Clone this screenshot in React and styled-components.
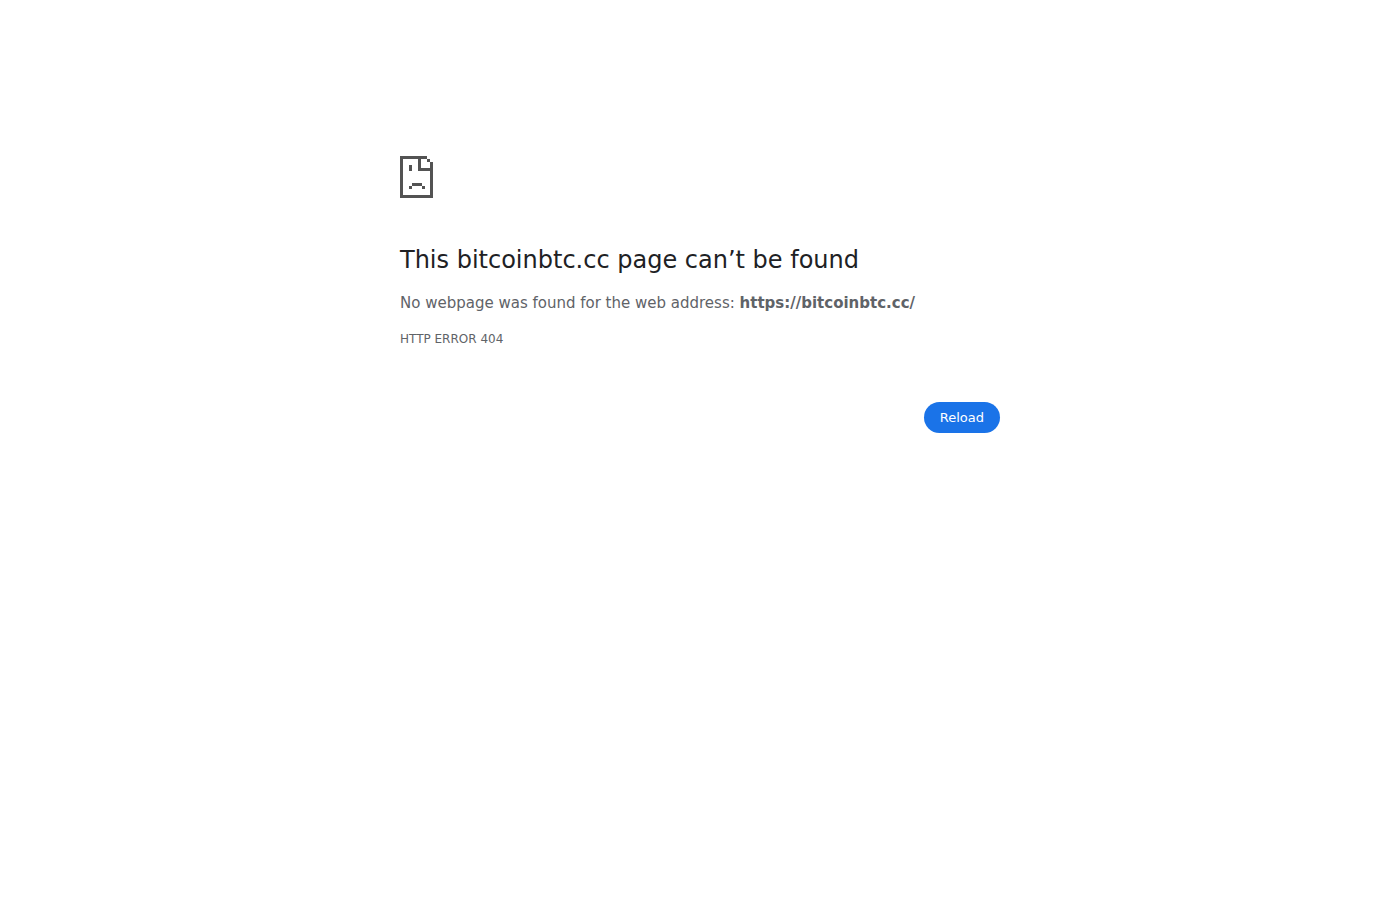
import React from "react";
import styled, { createGlobalStyle } from "styled-components";

const GlobalStyle = createGlobalStyle`
  body {
    margin: 0;
    background: #fff;
    color: #5f6368;
    font-family: "DejaVu Sans", sans-serif;
    font-size: 15px;
    line-height: 24px;
  }
`;

const Page = styled.main`
  box-sizing: border-box;
  max-width: 600px;
  margin: 0 auto;
  padding-top: 156px;
`;

const PageIcon = styled.svg`
  display: block;
  width: 33px;
  height: 42px;
  fill: #535353;
`;

const Title = styled.h1`
  margin: 47px 0 16px;
  color: #202124;
  font-size: 24px;
  font-weight: 500;
  line-height: 30px;
`;

const Message = styled.p`
  margin: 0;
`;

const ErrorCode = styled.p`
  margin: 12px 0 0;
  font-size: 12px;
`;

const Actions = styled.div`
  display: flex;
  justify-content: flex-end;
  margin-top: 51px;
`;

const ReloadButton = styled.button`
  padding: 8px 16px;
  border: 0;
  border-radius: 16px;
  background: #1a73e8;
  color: #fff;
  font-family: inherit;
  font-size: 13px;
  line-height: 15px;
  cursor: pointer;
`;

function SadPageIcon() {
  return (
    <PageIcon viewBox="0 0 33 42" shapeRendering="crispEdges" aria-hidden="true">
      <path
        d="M0 0h27v3H21v9h9V6h3v36H0zM3 3v36h27V15H18V3z"
        fillRule="evenodd"
      />
      <path d="M27 3h3v3h-3zM9 9h3v6H9zM12 27h10v3H12zM9 30h3v3H9zM22 30h3v3h-3z" />
    </PageIcon>
  );
}

export default function App() {
  return (
    <>
      <GlobalStyle />
      <Page>
        <SadPageIcon />
        <Title>This bitcoinbtc.cc page can’t be found</Title>
        <Message>
          No webpage was found for the web address: <strong>https://bitcoinbtc.cc/</strong>
        </Message>
        <ErrorCode>HTTP ERROR 404</ErrorCode>
        <Actions>
          <ReloadButton type="button" onClick={() => window.location.reload()}>
            Reload
          </ReloadButton>
        </Actions>
      </Page>
    </>
  );
}
